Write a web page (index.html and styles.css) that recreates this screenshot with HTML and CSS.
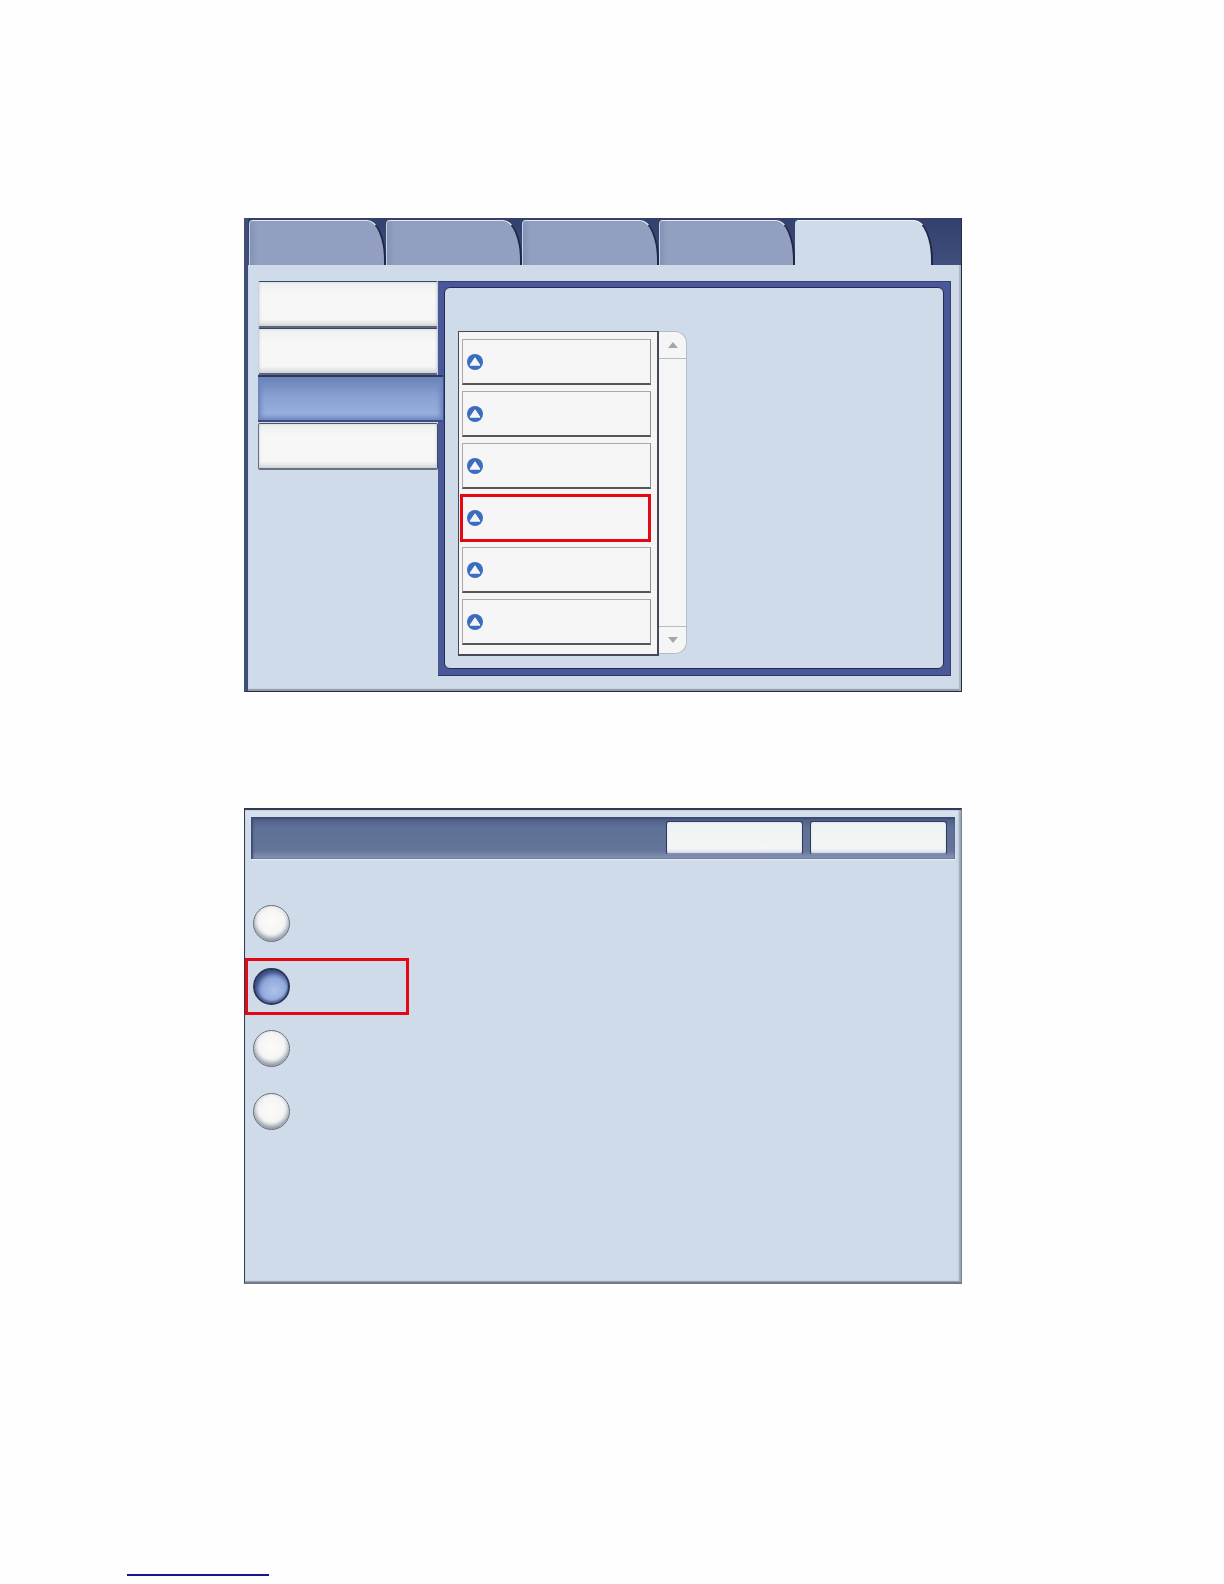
FILE: index.html
```html
<!DOCTYPE html>
<html lang="en">
<head>
<meta charset="utf-8">
<title>Device settings</title>
<link rel="stylesheet" href="styles.css">
</head>
<body>
<main class="page">
  <section class="frame frame-tabs">
    <div class="tabs">
      <div class="tab"></div>
      <div class="tab"></div>
      <div class="tab"></div>
      <div class="tab"></div>
      <div class="tab tab-active"></div>
    </div>
    <div class="tab-body">
      <div class="side">
        <div class="side-btn"></div>
        <div class="side-btn"></div>
        <div class="side-btn side-btn-active"></div>
        <div class="side-btn side-btn-last"></div>
      </div>
      <div class="panel">
        <div class="panel-inner">
          <div class="list">
            <div class="row"><svg class="up" viewBox="0 0 16 16"><circle cx="8" cy="8" r="8" fill="#3a6cc0"/><path d="M8 3.8 13 11.2H3Z" fill="#f4f6f8" stroke="#f4f6f8" stroke-linejoin="round"/></svg></div>
            <div class="row"><svg class="up" viewBox="0 0 16 16"><circle cx="8" cy="8" r="8" fill="#3a6cc0"/><path d="M8 3.8 13 11.2H3Z" fill="#f4f6f8" stroke="#f4f6f8" stroke-linejoin="round"/></svg></div>
            <div class="row"><svg class="up" viewBox="0 0 16 16"><circle cx="8" cy="8" r="8" fill="#3a6cc0"/><path d="M8 3.8 13 11.2H3Z" fill="#f4f6f8" stroke="#f4f6f8" stroke-linejoin="round"/></svg></div>
            <div class="row row-marked"><svg class="up" viewBox="0 0 16 16"><circle cx="8" cy="8" r="8" fill="#3a6cc0"/><path d="M8 3.8 13 11.2H3Z" fill="#f4f6f8" stroke="#f4f6f8" stroke-linejoin="round"/></svg></div>
            <div class="row"><svg class="up" viewBox="0 0 16 16"><circle cx="8" cy="8" r="8" fill="#3a6cc0"/><path d="M8 3.8 13 11.2H3Z" fill="#f4f6f8" stroke="#f4f6f8" stroke-linejoin="round"/></svg></div>
            <div class="row"><svg class="up" viewBox="0 0 16 16"><circle cx="8" cy="8" r="8" fill="#3a6cc0"/><path d="M8 3.8 13 11.2H3Z" fill="#f4f6f8" stroke="#f4f6f8" stroke-linejoin="round"/></svg></div>
          </div>
          <div class="scroll">
            <div class="scroll-btn"><span class="arrow-up"></span></div>
            <div class="scroll-btn scroll-btn-down"><span class="arrow-down"></span></div>
          </div>
        </div>
      </div>
    </div>
  </section>

  <section class="frame frame-dialog">
    <div class="dialog-head">
      <div class="head-btn"></div>
      <div class="head-btn"></div>
    </div>
    <div class="options">
      <div class="option"><span class="radio"></span></div>
      <div class="option option-marked"><span class="radio radio-on"></span></div>
      <div class="option"><span class="radio"></span></div>
      <div class="option"><span class="radio"></span></div>
    </div>
  </section>

  <div class="foot-link"></div>
</main>
</body>
</html>
```
FILE: styles.css
```css
*, *::after { box-sizing: border-box; }
html, body { margin: 0; padding: 0; background: #fefefe; }
.page { width: 1224px; height: 1584px; padding: 218px 0 0 244px; overflow: hidden; }

.frame { width: 718px; background: #cfdbe9; }

.frame-tabs {
  height: 474px;
  border-left: 4px solid #3e4d7a;
  border-right: 1px solid #242c46;
  border-bottom: 1px solid #242c46;
  box-shadow: inset -2px 0 1px #aab4c4, inset 0 -2px 1px #8e99ac;
}
.tabs {
  display: flex;
  height: 47px;
  padding: 2px 0 0 1px;
  background: linear-gradient(#33406c, #3f4e7c);
}
.tab {
  width: 136.5px;
  background: linear-gradient(90deg, #8393b6 0, #929fc0 8px);
  border-top: 1px solid #e2e8f1;
  border-left: 1px solid #c6d0e0;
  border-right: 2px solid #1f2745;
  border-radius: 4px 19px 0 0 / 4px 40px 0 0;
}
.tab-active {
  width: 138px;
  background: #cfdbe9;
  border-left: 0;
  border-top-color: #eef2f7;
}
.tab-body { display: flex; padding: 16px 0 0 10px; }
.side { width: 180px; display: flex; flex-direction: column; }
.side-btn {
  height: 47px;
  background: linear-gradient(#eef2ef, #f6f7f6 30%, #f5f6f5 85%, #d5d8dc);
  border: 1px solid #c9d1dc;
  border-top: 1px solid #39456a;
  border-bottom: 2px solid #5f6778;
  border-radius: 2px;
  box-shadow: inset 0 0 3px #c3cbd4;
}
.side-btn-active {
  position: relative;
  z-index: 1;
  width: 185px;
  background: linear-gradient(#6a83b8, #88a1d2 45%, #95aedd 85%, #7c93c6);
  border: 0;
  border-top: 2px solid #2c3766;
  border-bottom: 2px solid #3c4a8a;
  border-radius: 0;
  box-shadow: inset 3px 0 4px #6e85ba, inset -3px 0 4px #6e85ba;
}
.side-btn-last { margin-top: 1px; border-left: 1px solid #666f7f; border-right: 1px solid #444d5f; border-top-color: #555; border-bottom-color: #6a7180; }

.panel {
  width: 513px;
  height: 395px;
  padding: 5px 6px 6px 6px;
  background: #4a5899;
  border-top: 1px solid #33406c;
  border-right: 1px solid #33406c;
  border-bottom: 1px solid #2a3560;
}
.panel-inner {
  display: flex;
  align-items: flex-start;
  height: 100%;
  padding: 43px 0 0 13px;
  background: #cfdbe9;
  border: 1px solid #222c4e;
  border-radius: 6px;
}
.list {
  width: 201px;
  height: 325px;
  display: grid;
  grid-auto-rows: 46px;
  row-gap: 6px;
  align-content: start;
  padding: 7px 6px 0 3px;
  background: #f5f5f5;
  border: 1px solid #444a55;
  border-right-width: 2px;
  border-bottom-width: 2px;
}
.row {
  display: flex;
  align-items: center;
  padding-left: 4px;
  background: #f5f5f5;
  border: 1px solid #a9a9a9;
  border-right-color: #8f8f8f;
  border-bottom: 2px solid #555;
}
.row-marked {
  margin: -1px 0 -1px -2px;
  padding-left: 4px;
  border: 3px solid #e40813;
}
.up { width: 16px; height: 16px; display: block; }

.scroll {
  width: 28px;
  height: 323px;
  display: flex;
  flex-direction: column;
  justify-content: space-between;
  background: #f5f5f5;
  border: 1px solid #b4bcc8;
  border-left: 0;
  border-radius: 0 12px 12px 0;
}
.scroll-btn {
  height: 27px;
  display: flex;
  align-items: center;
  justify-content: center;
  border-bottom: 1px solid #b4bcc8;
}
.scroll-btn-down { border-bottom: 0; border-top: 1px solid #b4bcc8; }
.arrow-up, .arrow-down { width: 0; height: 0; border-left: 5px solid transparent; border-right: 5px solid transparent; }
.arrow-up { border-bottom: 6px solid #a6a6a6; }
.arrow-down { border-top: 6px solid #a6a6a6; }

.frame-dialog {
  height: 476px;
  margin-top: 116px;
  padding: 7px 6px 0 6px;
  border-top: 2px solid #2f3a55;
  border-left: 1px solid #2f3a55;
  border-right: 1px solid #7b8494;
  border-bottom: 2px solid #70798a;
  background: linear-gradient(#dbe4ef, #cfdbe9 12px);
  box-shadow: inset -2px 0 2px #98a2b2, inset 0 -1px 1px #98a2b2;
}
.dialog-head {
  display: flex;
  justify-content: flex-end;
  gap: 7px;
  height: 42px;
  padding: 4px 8px 0 0;
  background: linear-gradient(#4b5b84, #5f7096 25%, #647599 80%, #8997b6);
  box-shadow: inset 2px 0 2px #3e4c74, inset 0 2px 2px #3e4c74, 0 1px 1px #e4eaf2;
}
.head-btn {
  width: 137px;
  height: 34px;
  background: linear-gradient(#eef2f3, #f4f5f5 85%, #d9deea);
  border: 1px solid #2f3a5a;
  border-bottom: 2px solid #7f8cae;
  border-radius: 3px;
  box-shadow: inset 0 0 2px #cdd4de;
}
.options { display: flex; flex-direction: column; padding-top: 33.5px; margin-left: -5px; }
.option { height: 62.5px; padding-left: 6.5px; display: flex; align-items: center; position: relative; }
.option-marked::after {
  content: "";
  position: absolute;
  left: -1px;
  top: 2.5px;
  width: 164px;
  height: 57px;
  border: 3px solid #e40813;
}
.radio {
  width: 37px;
  height: 37px;
  border-radius: 50%;
  border: 1px solid #69717d;
  background: radial-gradient(circle at 50% 45%, #fbfbf9 0, #f5f6f4 48%, #e3e6ea 68%, #a4abb7 100%);
  box-shadow: inset 0 -3px 4px #8c94a1, inset 0 1px 1px #eef1f5;
}
.radio-on {
  border: 2px solid #2c3658;
  background: radial-gradient(circle at 58% 62%, #adc1e8 0, #93abdc 42%, #6780ba 70%, #3c4b84 100%);
  box-shadow: inset 2px 3px 4px #39477f, inset 0 -2px 2px #5a6a9e;
}
.foot-link {
  width: 142px;
  height: 2px;
  margin: 290px 0 0 -117px;
  background: #15159a;
}
```
